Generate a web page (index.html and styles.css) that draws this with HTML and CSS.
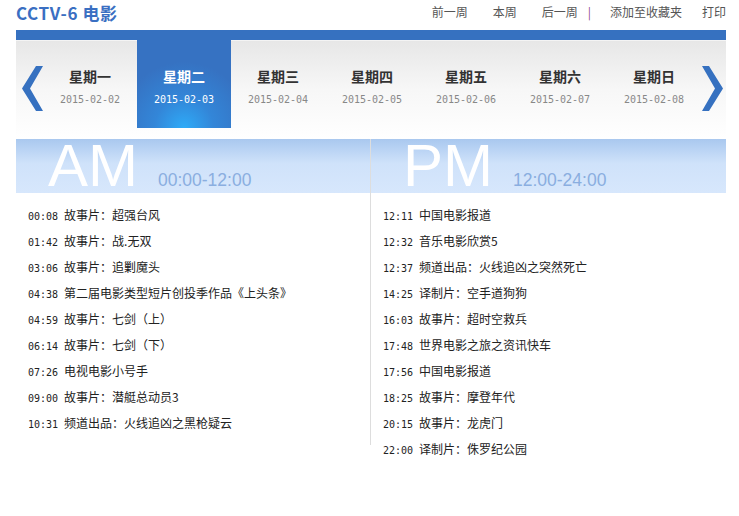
FILE: index.html
```html
<!DOCTYPE html>
<html lang="zh">
<head>
<meta charset="utf-8">
<title>CCTV-6 电影</title>
<link rel="stylesheet" href="styles.css">
</head>
<body>
<div class="page">
  <header class="top">
    <h1 class="title">CCTV-6 电影</h1>
    <nav class="links">
      <a class="lk lk-prev">前一周</a>
      <a class="lk lk-cur">本周</a>
      <a class="lk lk-next">后一周</a>
      <span class="sep">|</span>
      <a class="lk lk-fav">添加至收藏夹</a>
      <a class="lk lk-print">打印</a>
    </nav>
  </header>
  <div class="bar"></div>
  <div class="strip">
    <div class="arrow arrow-left">
      <svg width="21" height="45" viewBox="0 0 21 45"><polygon points="14,0 21,0 8,22.5 21,45 14,45 0,22.5" fill="#3671c0"/></svg>
    </div>
    <div class="days">
      <div class="day"><span class="wd">星期一</span><span class="dt">2015-02-02</span></div>
      <div class="day active"><span class="wd">星期二</span><span class="dt">2015-02-03</span></div>
      <div class="day"><span class="wd">星期三</span><span class="dt">2015-02-04</span></div>
      <div class="day"><span class="wd">星期四</span><span class="dt">2015-02-05</span></div>
      <div class="day"><span class="wd">星期五</span><span class="dt">2015-02-06</span></div>
      <div class="day"><span class="wd">星期六</span><span class="dt">2015-02-07</span></div>
      <div class="day"><span class="wd">星期日</span><span class="dt">2015-02-08</span></div>
    </div>
    <div class="arrow arrow-right">
      <svg width="21" height="45" viewBox="0 0 21 45"><polygon points="0,0 7,0 21,22.5 7,45 0,45 13,22.5" fill="#3671c0"/></svg>
    </div>
  </div>
  <div class="cols">
    <section class="col col-am">
      <div class="head"><span class="big">AM</span><span class="range">00:00-12:00</span></div>
      <ul class="list">
        <li><span class="time">00:08</span>故事片：超强台风</li>
        <li><span class="time">01:42</span>故事片：战.无双</li>
        <li><span class="time">03:06</span>故事片：追剿魔头</li>
        <li><span class="time">04:38</span>第二届电影类型短片创投季作品《上头条》</li>
        <li><span class="time">04:59</span>故事片：七剑（上）</li>
        <li><span class="time">06:14</span>故事片：七剑（下）</li>
        <li><span class="time">07:26</span>电视电影小号手</li>
        <li><span class="time">09:00</span>故事片：潜艇总动员3</li>
        <li><span class="time">10:31</span>频道出品：火线追凶之黑枪疑云</li>
      </ul>
    </section>
    <section class="col col-pm">
      <div class="head"><span class="big">PM</span><span class="range">12:00-24:00</span></div>
      <ul class="list">
        <li><span class="time">12:11</span>中国电影报道</li>
        <li><span class="time">12:32</span>音乐电影欣赏5</li>
        <li><span class="time">12:37</span>频道出品：火线追凶之突然死亡</li>
        <li><span class="time">14:25</span>译制片：空手道狗狗</li>
        <li><span class="time">16:03</span>故事片：超时空救兵</li>
        <li><span class="time">17:48</span>世界电影之旅之资讯快车</li>
        <li><span class="time">17:56</span>中国电影报道</li>
        <li><span class="time">18:25</span>故事片：摩登年代</li>
        <li><span class="time">20:15</span>故事片：龙虎门</li>
        <li><span class="time">22:00</span>译制片：侏罗纪公园</li>
      </ul>
    </section>
  </div>
</div>
</body>
</html>
```
FILE: styles.css
```css
* { box-sizing: border-box; }
html, body { margin: 0; padding: 0; background: #fff; }
body { font-family: "Noto Sans CJK SC", "Liberation Sans", sans-serif; color: #333; }
.page { width: 710px; margin-left: 16px; }

.top { height: 30px; display: flex; align-items: flex-start; justify-content: space-between; }
.title { margin: 2px 0 0 0; font-size: 17px; line-height: 22px; font-weight: 700; color: #3a6fc2; letter-spacing: 0.6px; }
.links { display: flex; align-items: center; font-size: 12px; line-height: 16px; margin-top: 4px; }
.lk { color: #555; text-decoration: none; }
.lk-prev { margin-right: 25px; }
.lk-cur { margin-right: 25px; }
.lk-next { margin-right: 10px; }
.sep { color: #8e4c8e; margin-right: 19px; }
.lk-fav { margin-right: 20px; }

.bar { height: 10px; background: #3671c0; }

.strip { height: 99px; display: flex; background: linear-gradient(#e7e7e7 0%, #f7f7f7 50%, #fff 100%); border-top: 1px solid #f4f4f4; }
.arrow { display: flex; padding-top: 25px; }
.arrow-left { width: 27px; padding-left: 6px; }
.arrow-right { flex: 1; padding-left: 1px; }
.days { display: flex; height: 88px; margin-top: -1px; }
.day { width: 94px; display: flex; flex-direction: column; align-items: center; }
.wd { font-size: 14px; font-weight: 700; line-height: 20px; margin-top: 26px; color: #333; }
.dt { font-family: "DejaVu Sans Mono", monospace; font-size: 10px; line-height: 14px; margin-top: 7px; color: #888; }
.day.active { background: radial-gradient(ellipse 70% 75% at 50% 100%, #2eabf8 0%, #3386d8 45%, #3672c2 100%); }
.day.active .wd, .day.active .dt { color: #fff; }

.cols { display: flex; align-items: flex-start; }
.col-am { width: 355px; border-right: 1px solid #ddd; }
.col-pm { flex: 1; }
.head { height: 54px; display: flex; align-items: flex-start; padding-left: 32px; background: linear-gradient(#a9c8ef 0%, #cfe2fa 45%, #d7e7fc 100%); }
.big { font-family: "Liberation Sans", Arial, sans-serif; font-size: 60px; line-height: 48px; color: #fff; margin-top: 3px; }
.range { font-family: "Liberation Sans", Arial, sans-serif; font-size: 17.5px; line-height: 18px; color: #8aaee0; margin-left: 20px; margin-top: 32px; }

.list { list-style: none; margin: 0; padding: 9px 0 9px 12px; }
.list li { font-size: 12px; line-height: 26px; height: 26px; color: #222; white-space: nowrap; }
.time { font-family: "DejaVu Sans Mono", monospace; font-size: 10px; margin-right: 6px; color: #222; }
```
